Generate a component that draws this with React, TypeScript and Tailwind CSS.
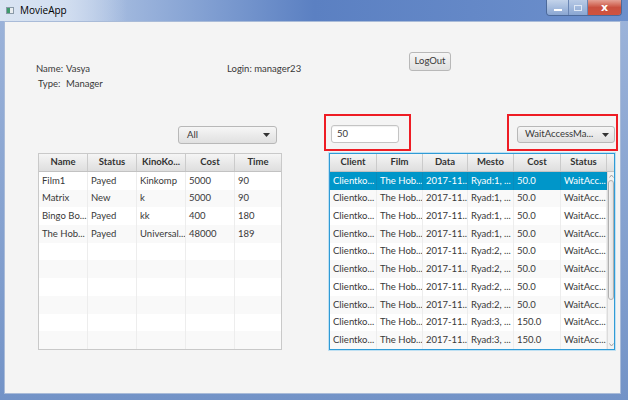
import React from "react";

const leftData: string[][] = [
  ["Film1", "Payed", "Kinkomp", "5000", "90"],
  ["Matrix", "New", "k", "5000", "90"],
  ["Bingo Bo...", "Payed", "kk", "400", "180"],
  ["The Hob...", "Payed", "Universal...", "48000", "189"],
  ["", "", "", "", ""],
  ["", "", "", "", ""],
  ["", "", "", "", ""],
  ["", "", "", "", ""],
  ["", "", "", "", ""],
  ["", "", "", "", ""],
];

const leftCols = [
  { name: "Name", w: "w-[49px]" },
  { name: "Status", w: "w-[49px]" },
  { name: "KinoKo...", w: "w-[49px]" },
  { name: "Cost", w: "w-[49px]" },
  { name: "Time", w: "w-[46px]" },
];

const rightCols = [
  { name: "Client", w: "w-[47px]" },
  { name: "Film", w: "w-[46px]" },
  { name: "Data", w: "w-[45px]" },
  { name: "Mesto", w: "w-[46px]" },
  { name: "Cost", w: "w-[47px]" },
  { name: "Status", w: "w-[46px]" },
];

const rightData: string[][] = [1, 1, 1, 1, 2, 2, 2, 2, 3, 3].map((r) => [
  "Clientko...",
  "The Hob...",
  "2017-11...",
  `Ryad:${r}, ...`,
  r === 3 ? "150.0" : "50.0",
  "WaitAcc...",
]);

function Arrow() {
  return (
    <svg width="7" height="4" viewBox="0 0 7 4" className="shrink-0">
      <path d="M0 0 L7 0 L3.5 4 Z" fill="#333" />
    </svg>
  );
}

export default function App() {
  return (
    <div className="w-[628px] h-[400px] flex flex-col bg-gradient-to-b from-[#9db4da] to-[#7393c7] font-['Lato','Open_Sans',sans-serif] text-[9.5px] text-[#383838] overflow-hidden">
      {/* Title bar */}
      <div className="h-[21px] flex items-start bg-gradient-to-r from-[#cfdcee] via-[#5b80c2] to-[#6d90cc]">
        <div className="flex items-center h-[21px] pl-[6px] gap-[6px] bg-gradient-to-r from-[#d9e4f2] via-[#d2def0] to-transparent pr-[60px]">
          <div className="w-[8px] h-[7px] border border-[#8a9aa8] bg-[#e8ecef] flex">
            <div className="w-[3px] h-full bg-[#3f9a6c]" />
          </div>
          <span className="text-[10px] text-black font-['Open_Sans',sans-serif]">MovieApp</span>
        </div>
        <div className="flex-1" />
        <div className="flex h-[16px] mr-[6px] rounded-b-[4px] overflow-hidden border border-t-0 border-[#4d6a9a]">
          <div className="w-[22px] h-full bg-gradient-to-b from-[#c3d3ea] to-[#8aa6d2] border-r border-[#6a86b4] flex items-center justify-center">
            <div className="w-[8px] h-[2px] bg-white mt-[4px]" />
          </div>
          <div className="w-[19px] h-full bg-gradient-to-b from-[#b9cbe6] to-[#8aa6d2] border-r border-[#6a86b4] flex items-center justify-center">
            <div className="w-[8px] h-[6px] border border-[#dfe8f5]" />
          </div>
          <div className="w-[33px] h-full bg-gradient-to-b from-[#e4a195] via-[#c9503f] to-[#d0533f] flex items-center justify-center text-white text-[11px] font-bold font-['DejaVu_Sans',sans-serif] leading-none">
            x
          </div>
        </div>
      </div>

      {/* Content */}
      <div className="ml-[4px] mr-[7px] h-[373px] border border-[#a9bbd8] bg-[#f4f4f4] flex flex-col">
        {/* Row 1 */}
        <div className="flex items-start mt-[30px]">
          <div className="ml-[31px] w-[191px] pt-[9px] leading-[15px]">
            <div className="flex">
              <span className="w-[30px]">Name:</span>
              <span>Vasya</span>
            </div>
            <div className="flex pl-[2px]">
              <span className="w-[28px]">Type:</span>
              <span>Manager</span>
            </div>
          </div>
          <div className="w-[182px] pt-[9px] leading-[15px]">Login: manager23</div>
          <div className="w-[42px] h-[19px] rounded-[3px] border border-[#b8b8b8] bg-gradient-to-b from-[#f6f6f6] to-[#e0e0e0] flex items-center justify-center">
            LogOut
          </div>
        </div>

        {/* Row 2 */}
        <div className="flex items-start mt-[23px] h-[37px]">
          <div className="ml-[173px] mt-[12px] w-[99px] h-[18px] rounded-[3px] border border-[#b8b8b8] bg-gradient-to-b from-[#f6f6f6] to-[#e0e0e0] flex items-center pl-[8px] pr-[6px]">
            <span className="flex-1">All</span>
            <Arrow />
          </div>
          <div className="ml-[47px] w-[87px] h-[37px] border-2 border-[#ee1c24]">
            <div className="ml-[5px] mt-[9px] w-[68px] h-[18px] rounded-[3px] border border-[#c4c4c4] bg-white shadow-[inset_0_1px_1px_rgba(0,0,0,0.06)] flex items-center pl-[5px]">
              50
            </div>
          </div>
          <div className="ml-[96px] w-[111px] h-[37px] border-2 border-[#ee1c24]">
            <div className="ml-[8px] mt-[10px] w-[98px] h-[17px] rounded-[3px] border border-[#b8b8b8] bg-gradient-to-b from-[#f6f6f6] to-[#e0e0e0] flex items-center pl-[7px] pr-[5px]">
              <span className="flex-1 whitespace-nowrap">WaitAccessMa...</span>
              <Arrow />
            </div>
          </div>
        </div>

        {/* Row 3: tables */}
        <div className="flex items-start mt-[2px]">
          {/* Left table */}
          <div className="ml-[33px] w-[244px] h-[197px] border border-[#c9c9c9] bg-white flex flex-col overflow-hidden">
            <div className="flex h-[18px] border-b border-[#c2c2c2] bg-gradient-to-b from-[#f5f5f5] to-[#dedede] shrink-0">
              {leftCols.map((c, i) => (
                <div
                  key={c.name}
                  className={`${c.w} h-full flex items-center justify-center font-bold text-[#333] ${i < leftCols.length - 1 ? "border-r border-[#cbcbcb]" : ""}`}
                >
                  {c.name}
                </div>
              ))}
            </div>
            {leftData.map((row, ri) => (
              <div key={ri} className={`flex h-[17.7px] shrink-0 ${ri % 2 === 0 ? "bg-white" : "bg-[#f9f9f9]"}`}>
                {row.map((cell, ci) => (
                  <div
                    key={ci}
                    className={`${leftCols[ci].w} h-full flex items-center pl-[3px] whitespace-nowrap overflow-hidden ${ci < row.length - 1 ? "border-r border-[#ededed]" : ""}`}
                  >
                    {cell}
                  </div>
                ))}
              </div>
            ))}
          </div>

          {/* Right table */}
          <div className="ml-[47px] w-[286px] h-[197px] border border-[#2f9bd6] shadow-[0_0_0_1px_#bfe0f2] bg-white flex flex-col overflow-hidden">
            <div className="flex h-[18px] border-b border-[#c2c2c2] bg-gradient-to-b from-[#f5f5f5] to-[#dedede] shrink-0">
              {rightCols.map((c) => (
                <div
                  key={c.name}
                  className={`${c.w} h-full flex items-center justify-center font-bold text-[#333] border-r border-[#cbcbcb]`}
                >
                  {c.name}
                </div>
              ))}
              <div className="flex-1" />
            </div>
            <div className="flex flex-1 min-h-0">
              <div className="w-[277px] flex flex-col">
                {rightData.map((row, ri) => (
                  <div
                    key={ri}
                    className={`flex h-[17.7px] shrink-0 ${ri === 0 ? "bg-[#0096c9] text-white" : ri % 2 === 0 ? "bg-white" : "bg-[#f9f9f9]"}`}
                  >
                    {row.map((cell, ci) => (
                      <div
                        key={ci}
                        className={`${rightCols[ci].w} h-full flex items-center pl-[3px] whitespace-nowrap overflow-hidden border-r ${ri === 0 ? "border-[#0a8bbb]" : "border-[#ededed]"}`}
                      >
                        {cell}
                      </div>
                    ))}
                  </div>
                ))}
              </div>
              <div className="flex-1 bg-[#f2f2f2] border-l border-[#dcdcdc] flex flex-col items-center">
                <svg width="5" height="4" viewBox="0 0 5 4" className="mt-[2px]">
                  <path d="M0.5 3.5 L2.5 1 L4.5 3.5" fill="none" stroke="#9a9a9a" strokeWidth="0.9" />
                </svg>
                <div className="mt-[2px] w-[6px] h-[120px] rounded-[3px] border border-[#b0b0b0] bg-gradient-to-r from-[#f4f4f4] to-[#e2e2e2]" />
                <div className="flex-1" />
                <svg width="5" height="4" viewBox="0 0 5 4" className="mb-[2px]">
                  <path d="M0.5 0.5 L2.5 3 L4.5 0.5" fill="none" stroke="#9a9a9a" strokeWidth="0.9" />
                </svg>
              </div>
            </div>
          </div>
        </div>
      </div>
    </div>
  );
}
